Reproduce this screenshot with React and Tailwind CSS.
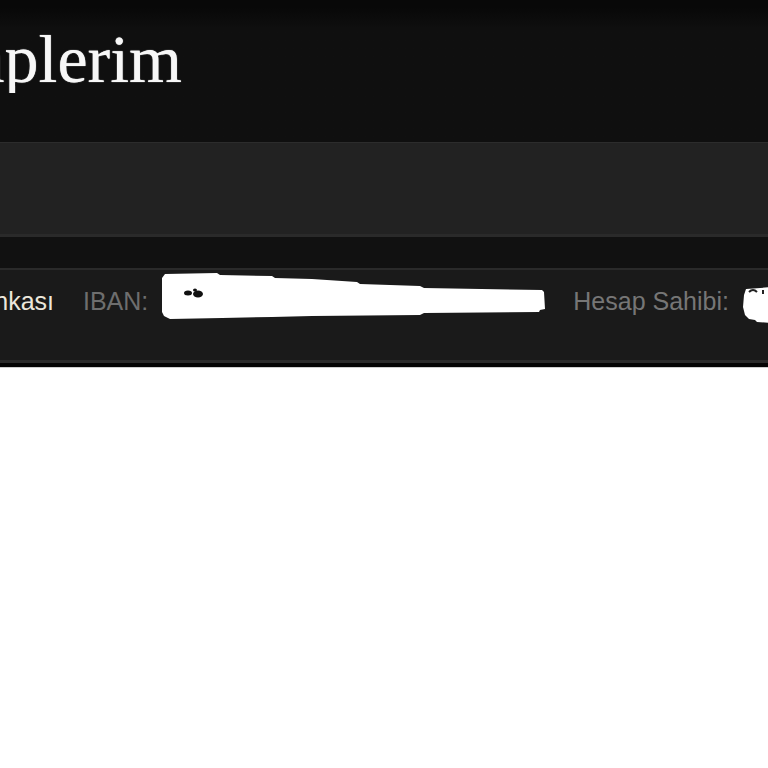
export default function App() {
  return (
    <div className="min-h-[768px] w-[768px] overflow-hidden bg-white">
      {/* Page header */}
      <div className="h-[142px] bg-gradient-to-b from-[#080808] from-5% to-[#0f0f0f] to-20% pt-[25px]">
        <div className="flex w-[182px] justify-end overflow-hidden">
          <h1 className="whitespace-nowrap font-['Liberation_Serif',serif] text-[68px] leading-none text-[#f7f7f7] [text-shadow:0_0_1px_#f7f7f7]">
            Banka Hesaplerim
          </h1>
        </div>
      </div>

      {/* Toolbar band */}
      <div className="h-[95px] border-t border-[#2c2c2c] border-b-[3px] border-b-[#2a2a2a] bg-[#222222]"></div>

      <div className="h-[31px] bg-[#111111]"></div>

      {/* Account row */}
      <div className="border-t-2 border-[#2a2a2a] bg-[#1a1a1a]">
        <div className="flex h-[90px] items-start pt-[19px] font-['Liberation_Sans',Arial,sans-serif] text-[25px] leading-none">
          <div className="flex w-[54px] shrink-0 justify-end overflow-hidden">
            <span className="whitespace-nowrap text-[#ece7dc]">Ziraat Bankası</span>
          </div>
          <span className="ml-[29px] shrink-0 text-[#6e6e6e]">IBAN:</span>
          <Redacted />
          <span className="ml-[27px] shrink-0 whitespace-nowrap text-[#767676]">Hesap Sahibi:</span>
          <NameBlob />
        </div>
        <div className="h-[3px] bg-[#2b2b2b]"></div>
        <div className="h-[4px] bg-[#050505]"></div>
        <div className="h-px bg-[#cfcfcf]"></div>
      </div>
    </div>
  );
}

function Redacted() {
  return (
    <svg
      className="-mt-[17px] ml-[14px] shrink-0"
      width="384"
      height="48"
      viewBox="0 0 384 48"
    >
      <path
        d="M3 2 L55 1 L58 3 L110 4 L113 6 L150 7 L195 10 L198 12 L258 14 L262 16 L380 18 L382 20 L383 37 L378 38 L377 40 L262 41 L258 43 L150 44 L110 45 L60 46 L8 47 L2 44 L0 40 L0 6 Z"
        fill="#ffffff"
      />
      <ellipse cx="26" cy="21" rx="4" ry="2.5" fill="#111111" />
      <ellipse cx="36" cy="22" rx="5" ry="3.5" fill="#111111" />
      <ellipse cx="33" cy="18" rx="2" ry="1.5" fill="#111111" />
    </svg>
  );
}

function NameBlob() {
  return (
    <svg
      className="-mt-[2px] ml-[14px] shrink-0"
      width="30"
      height="36"
      viewBox="0 0 30 36"
    >
      <path d="M3 2 L30 0 L30 36 L14 35 L12 33 L6 32 L2 28 L0 20 L1 8 Z" fill="#ffffff" />
      <path d="M6 5 Q10 1 14 5" stroke="#222222" strokeWidth="2" fill="none" />
      <rect x="19" y="3" width="2" height="4" fill="#222222" />
    </svg>
  );
}
